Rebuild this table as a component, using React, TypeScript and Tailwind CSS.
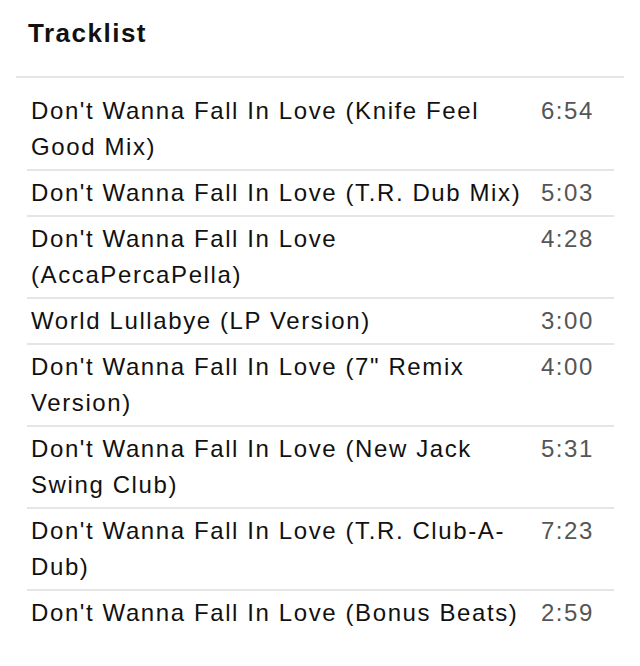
const tracks = [
  { title: "Don't Wanna Fall In Love (Knife Feel Good Mix)", time: "6:54" },
  { title: "Don't Wanna Fall In Love (T.R. Dub Mix)", time: "5:03" },
  { title: "Don't Wanna Fall In Love (AccaPercaPella)", time: "4:28" },
  { title: "World Lullabye (LP Version)", time: "3:00" },
  { title: "Don't Wanna Fall In Love (7\" Remix Version)", time: "4:00" },
  { title: "Don't Wanna Fall In Love (New Jack Swing Club)", time: "5:31" },
  { title: "Don't Wanna Fall In Love (T.R. Club-A-Dub)", time: "7:23" },
  { title: "Don't Wanna Fall In Love (Bonus Beats)", time: "2:59" },
]

export default function App() {
  return (
    <div className="min-h-[666px] w-[640px] bg-white font-['Liberation_Sans',Arial,sans-serif] text-[#111]">
      <div className="mx-4 border-b-2 border-[#e5e5e5] px-3 pt-[17px] pb-[27px]">
        <h2 className="text-[26px] font-bold leading-[32px] tracking-[1.5px]">Tracklist</h2>
      </div>

      <ul className="mt-[11px] ml-[27px] mr-[26px]">
        {tracks.map((t) => (
          <li
            key={t.title + t.time}
            className="flex border-b-2 border-[#e5e5e5] py-1 pl-1 text-[24px] leading-[36px] tracking-[1.6px] last:border-b-0"
          >
            <span className="flex-1">{t.title}</span>
            <span className="pl-4 pr-5 text-[#555]">{t.time}</span>
          </li>
        ))}
      </ul>
    </div>
  )
}
